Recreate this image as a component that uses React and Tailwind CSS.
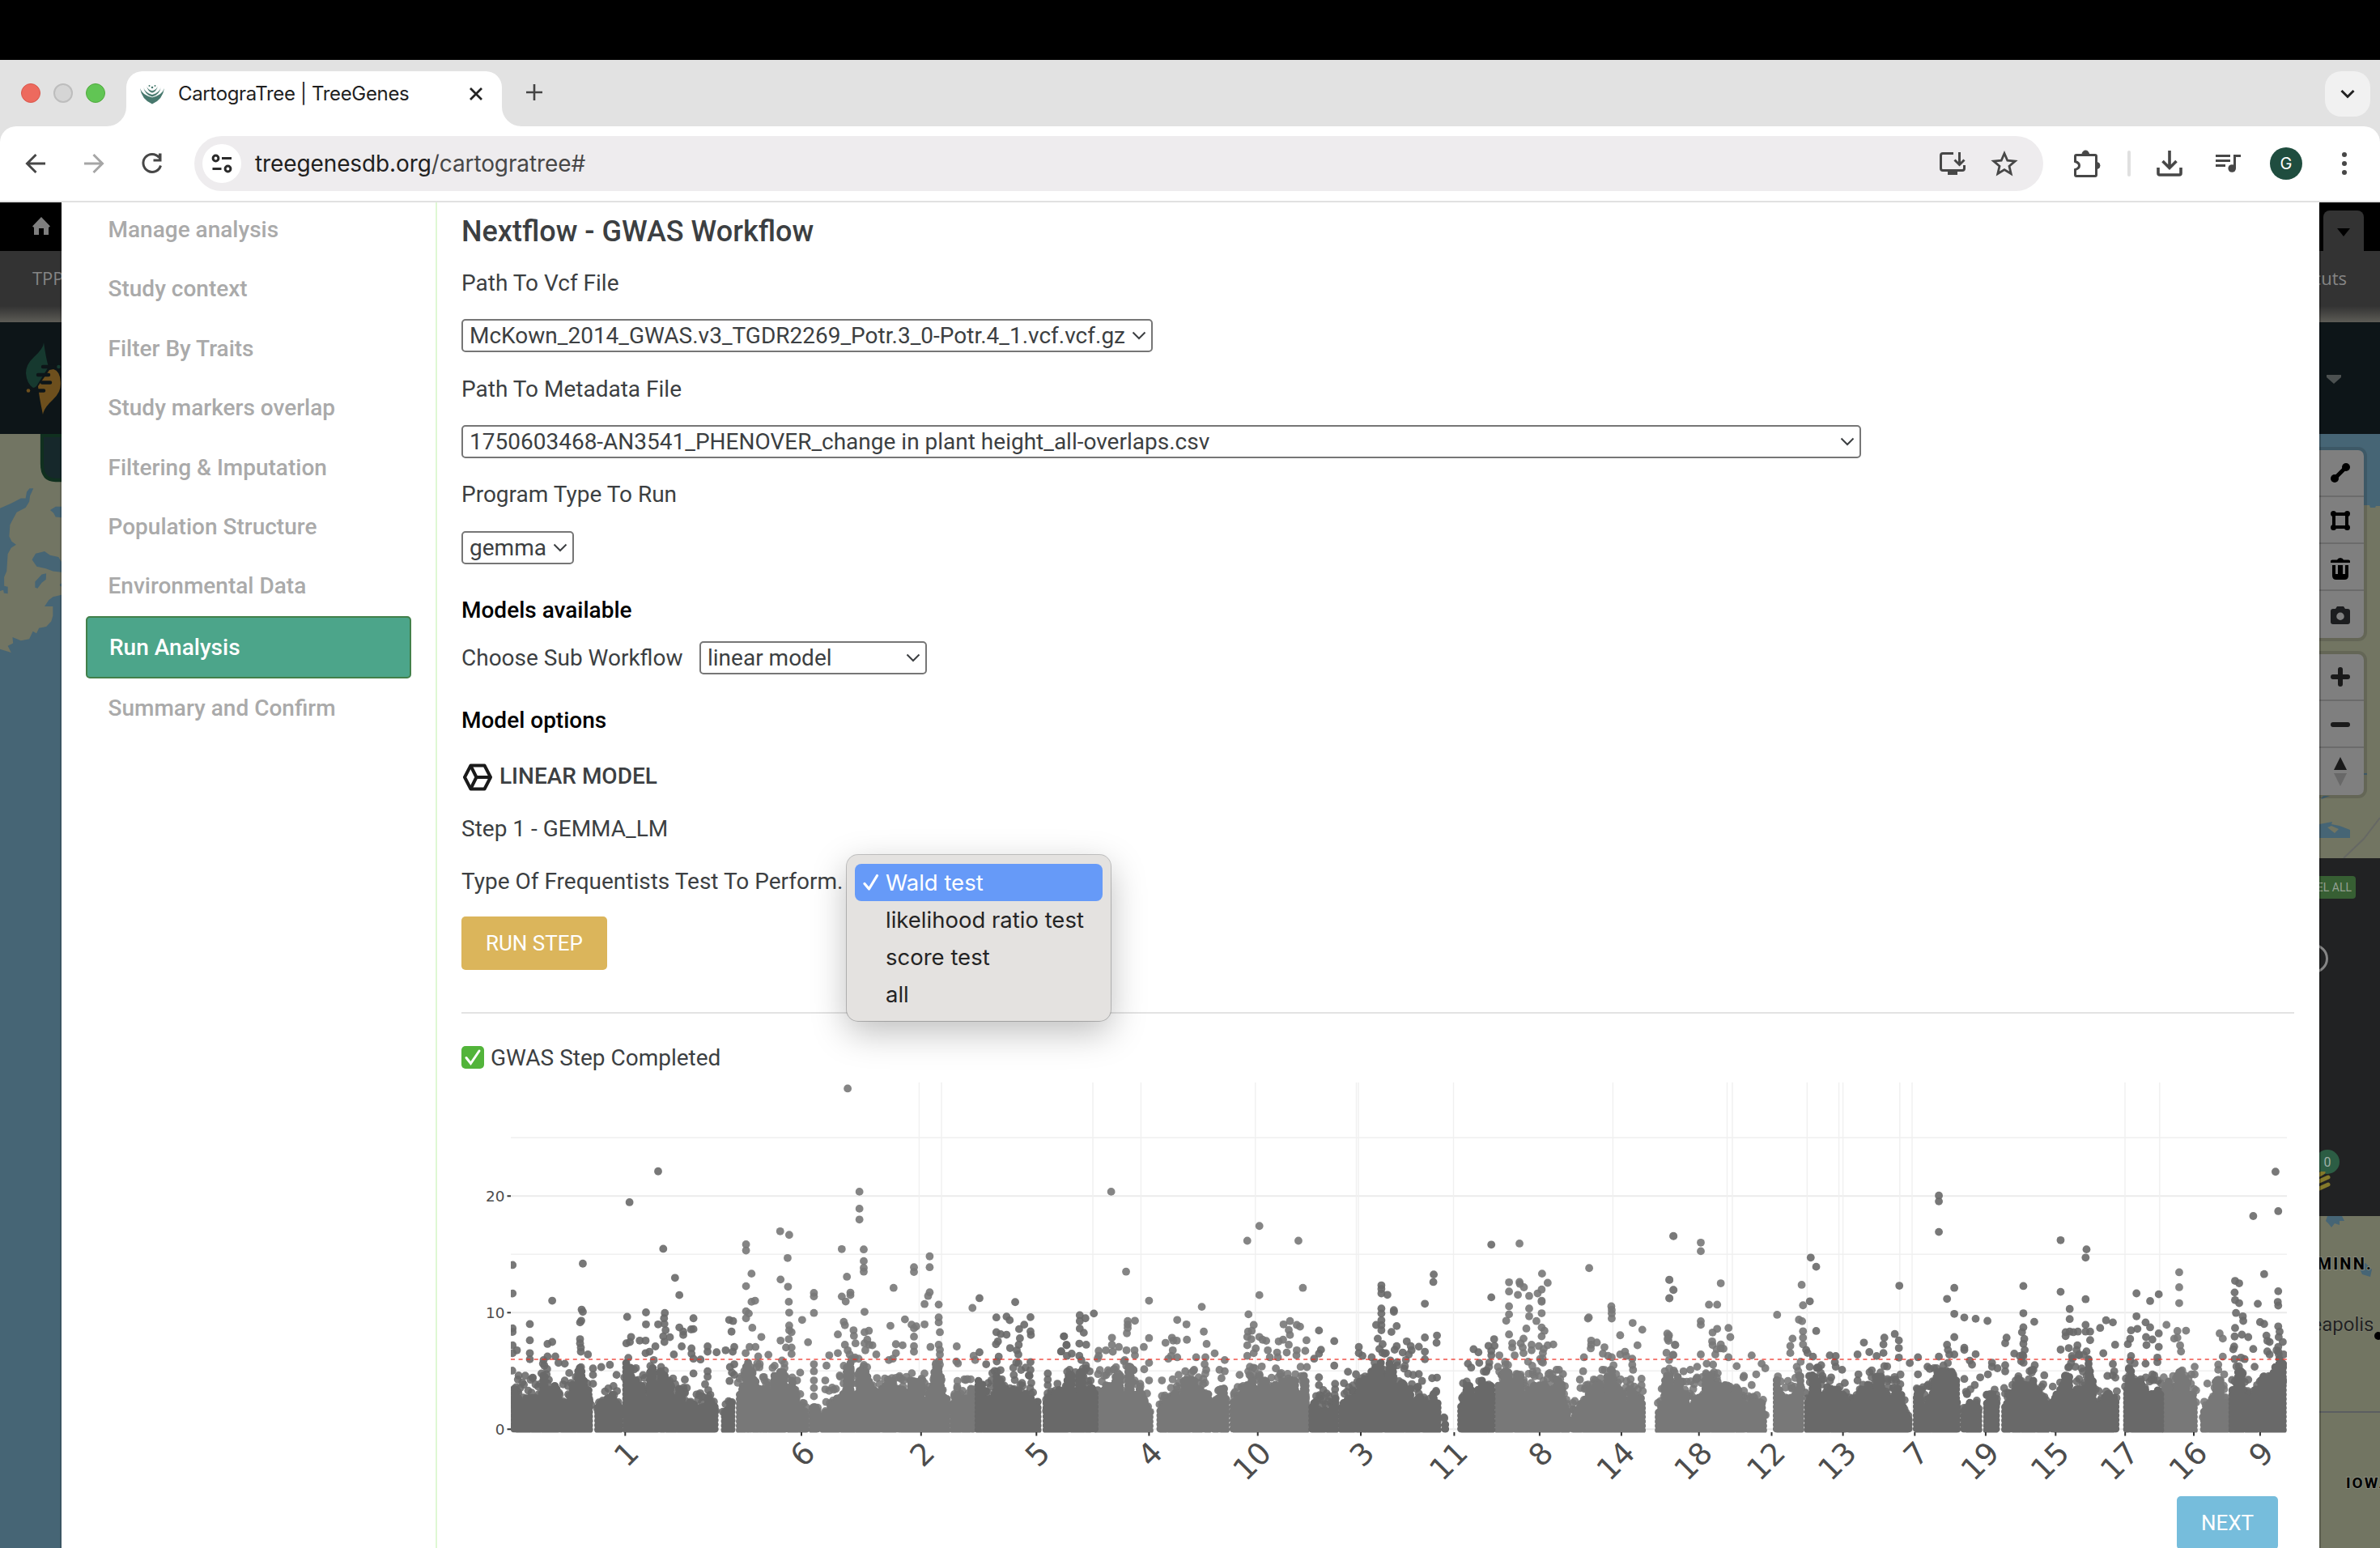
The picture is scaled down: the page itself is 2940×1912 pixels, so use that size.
import React from "react";

const DARK = "#696969";
const LIGHT = "#787878";

/* ---------- Manhattan plot data ---------- */

// Each panel keeps its own origin and resolution; points are x,y pairs in panel units.
const PANELS = [
  {
    x0: 560, sx: 2.0632, sy: 2.9037,
    points: [
      1005,71,522,368,449,479,1035,441,1035,502,1035,541,833,583,856,596,535,646,990,647,1046,648,746,630,746,652,151,704,330,699,852,679,1046,690,1046,714,1046,728,1214,673,1214,712,1174,712,1174,729,760,735,565,750,834,756,1003,746,746,780,853,782,1122,786,151,806,576,812,252,832,919,804,919,817,990,817,1012,803,1012,812,1000,835,1214,802,1210,815,1201,844,1237,846,769,832,760,836,855,836,1341,823,1323,858,1432,837,327,864,330,872,491,874,539,876,443,890,746,870,753,878,746,895,856,875,919,876,1048,872,195,916,326,904,323,910,491,917,522,917,612,895,612,934,606,935,703,901,713,905,709,943,537,895,538,915,541,938,535,960,538,980,576,928,586,943,586,955,552,963,889,901,856,921,856,938,862,945,855,970,762,929,785,962,834,975,904,981,995,908,998,920,980,953,1020,938,1021,958,1059,940,1048,945,1114,922,1151,899,1168,918,1180,924,1201,917,1174,931,1237,892,1237,910,1240,945,1174,961,151,931,151,944,195,974,323,970,323,985,325,1000,325,1015,252,980,240,987,151,992,162,1010,151,1020,195,1020,195,1042,240,1032,260,1032,343,1025,441,985,453,962,450,980,475,975,490,975,515,996,500,1015,490,1020,562,1025,582,996,607,1003,607,1022,612,1040,648,996,648,1015,671,1017,694,1010,716,998,712,1015,755,998,770,998,745,1020,803,1026,777,1032,848,1000,862,1000,862,1023,958,1028,980,1020,998,990,1005,1010,1010,1025,1025,985,1068,992,1055,972,1060,990,1050,1010,1048,985,1078,1025,1128,988,1145,992,1128,1020,1174,995,1174,1015,1216,998,1237,990,1240,1008,1240,1025,1283,996,1286,1057,1326,1030,1341,1017,1330,1045,1384,892,1410,889,1418,902,1471,891,1455,918,1442,934,1472,955,1471,942,1384,945,1395,952,1410,954,1388,978,1383,988,1444,967,1441,990,1419,1002,1436,1010,1440,1025,1390,1033,1385,1050,1556,960,1563,992,1549,1014,1358,1060,356,1075,356,1098,377,1070,399,1062,416,1098,356,1130,648,1085,648,1105,612,1093,590,1115,630,1043,884,1090,876,1118,919,1060,919,1085,919,1118,919,1145,919,1175,951,1065,948,1118,948,1150,1515,1093,1515,1115,1515,1135,1471,1052,1471,1080,705,1070,710,1090,716,1060,704,1120,230,1045,232,1065,268,1055,284,1058,1282,1050,1110,1045,1120,1040,585,1150,590,1160,716,1098,
    ],
    clusters: [
      [DARK, 147,5.5, 155,5.5, 160,4.7, 210,4.5, 222,4.4, 230,5.8, 240,4.6, 260,4.5, 280,3.6, 293,5, 310,5, 325,6, 338,4, 360,3],
      [DARK, 361,2.5, 380,3, 395,4.3, 415,3.5, 434,2],
      [DARK, 432,5, 440,6.5, 455,6.2, 480,5.2, 490,3.4, 505,6, 540,5.6, 560,5, 575,3.6, 612,3.8, 640,4, 680,3],
      [DARK, 683,2, 700,2.5, 722,3.2],
      [LIGHT, 722,3.5, 735,5.4, 750,6.2, 770,6, 800,5.4, 820,6, 850,6, 862,5, 872,3.6, 885,3.2, 908,1.3],
      [LIGHT, 910,1.6, 918,2.8, 940,1.4],
      [LIGHT, 937,1.6, 960,3.4, 980,4.2, 995,6.2, 1040,6.3, 1060,5, 1085,4.4, 1110,4.8, 1150,4.8, 1185,5, 1215,4.6, 1237,7, 1248,4.2, 1268,1.5],
      [LIGHT, 1266,2, 1280,4, 1300,4.6, 1333,5],
      [DARK, 1332,4.6, 1343,4.8, 1360,3.6, 1380,5.7, 1395,5.2, 1420,4.6, 1440,6.5, 1470,5, 1485,3, 1500,1.6],
      [DARK, 1503,2.4, 1515,3.4, 1540,2.8, 1568,4.6],
    ],
  },
  {
    x0: 1300, sx: 2.0103, sy: 2.9037,
    points: [
      146,441,514,564,484,617,611,617,183,728,240,832,371,854,514,812,622,786,1090,631,1160,627,1333,715,1542,600,1532,757,1542,793,1532,823,947,738,946,765,925,843,817,777,817,790,817,806,832,811,817,860,817,878,848,866,848,872,855,923,842,944,804,919,817,902,817,920,817,938,1090,820,1134,766,1134,799,1134,852,1134,881,1160,765,1161,772,1171,784,1156,811,1184,815,1184,860,1184,888,1205,806,1215,792,1216,735,1230,768,1215,832,1215,836,1215,877,1202,905,1177,932,1127,904,1134,953,1215,928,1222,940,1215,960,1388,852,1389,865,1389,878,1389,896,1332,892,1330,896,1441,912,1465,936,1410,956,1453,992,1371,999,1352,982,1338,975,1338,990,1337,1003,103,878,68,884,68,905,68,932,82,895,78,947,29,960,35,990,67,986,84,990,22,1014,48,1022,36,1030,67,1030,72,1045,187,905,187,918,187,930,205,904,185,949,240,966,148,965,148,990,165,998,184,1010,204,1010,227,998,205,1028,133,1010,115,1012,150,1015,115,1030,310,901,333,917,376,943,297,965,300,975,309,975,334,972,281,983,383,987,403,1021,428,1045,299,1010,295,1030,310,1035,357,1035,380,1035,288,1040,487,881,500,919,495,940,486,943,484,962,494,970,514,962,522,972,531,976,484,992,505,1003,562,978,573,972,574,917,590,905,607,919,615,925,587,937,590,955,631,974,662,939,535,1010,558,1018,582,1018,587,990,607,1010,628,1012,606,1028,500,1020,484,1030,540,1035,560,1035,700,977,667,1008,662,1022,650,1040,700,1065,761,998,761,1020,770,1030,808,968,820,988,812,1005,855,995,850,1008,880,978,890,995,910,997,925,964,925,1015,955,957,954,983,892,1010,870,1018,885,1025,793,1035,828,1020,925,1042,1097,970,1083,994,1098,994,1046,1006,1058,1017,1090,1012,1090,1028,1110,1028,1142,1000,1142,985,1170,968,1163,985,1168,1000,1190,990,1208,995,1220,1005,1218,1020,1244,989,1230,992,1190,1010,1170,1020,1148,1028,1320,1035,1367,1022,1380,1030,1389,1035,1410,1025,1422,1015,1425,1030,1440,1040,1527,950,1530,962,1530,976,1547,991,1525,1019,1542,1027,240,1055,228,1078,240,1118,218,1130,235,1165,272,1118,465,1098,662,1107,662,1135,734,1087,754,1096,724,1128,702,1130,702,1150,910,1095,918,1120,910,1165,955,1108,943,1110,1032,1058,1040,1072,1060,1055,1318,1085,1310,1115,1463,1112,1463,1135,1445,1140,1268,1095,1252,1080,1258,1080,1442,1080,1440,1062,1366,1080,520,1068,555,1075,632,1070,330,1085,352,1080,378,1060,382,1080,415,1080,428,1085,420,1110,
    ],
    clusters: [
      [DARK, 0,3.4, 20,4, 40,5.4, 55,4.8, 70,6.4, 90,5.4, 112,4.2],
      [LIGHT, 107,5.6, 114,6.5, 130,5.4, 150,6, 180,6, 200,5.6, 215,3.8, 230,3, 248,1],
      [LIGHT, 262,2.6, 280,3.8, 300,5, 315,5.2, 335,4.8, 350,5, 375,5.2, 394,3.4],
      [LIGHT, 396,2.8, 415,4.2, 428,4.2, 441,3],
      [LIGHT, 442,2.8, 465,4, 485,6.5, 500,5.6, 520,4.8, 550,5, 590,5.4, 620,5.4, 638,4.8],
      [DARK, 636,2, 645,2.8, 660,3.6, 680,3.2, 690,2.4, 702,4, 711,2],
      [DARK, 712,2.2, 724,3, 740,3.7, 770,4.6, 795,5.4, 820,7, 850,5.6, 882,6.4, 895,4.6, 920,3, 938,2.2, 953,4, 968,1.6],
      [DARK, 969,1, 978,1.2, 988,1],
      [DARK, 1007,2, 1030,5, 1045,3.4, 1062,4.6, 1088,6.5, 1103,5.4],
      [LIGHT, 1101,5.6, 1112,6.3, 1140,5.4, 1180,6, 1220,6.4, 1240,4.8, 1262,4.7, 1275,3, 1287,1.5],
      [LIGHT, 1284,1.2, 1294,2.2, 1310,3.5, 1330,4.4, 1360,4.7, 1390,6, 1410,4.7, 1428,4.5, 1445,3.5, 1465,3.6, 1476,2],
      [LIGHT, 1500,2, 1510,3.4, 1527,6, 1545,5, 1568,4.6],
    ],
  },
  {
    x0: 2060, sx: 1.7818, sy: 2.6486,
    points: [
      13,548,73,569,73,597,4,691,13,724,4,751,117,702,91,772,109,772,73,826,73,838,134,848,109,851,99,863,138,878,117,902,123,916,98,892,99,904,108,918,117,915,105,935,73,935,185,938,16,903,3,872,0,884,12,936,134,944,241,805,315,618,327,648,295,707,298,774,313,761,289,821,296,826,327,858,298,859,298,880,275,883,298,902,270,907,305,920,308,930,270,930,597,415,597,434,597,534,510,710,1338,337,1344,466,1289,482,865,561,922,591,920,618,783,711,865,730,920,754,631,717,615,753,631,802,653,814,678,818,704,825,783,800,807,828,885,786,885,819,1126,666,1126,715,1126,767,1032,735,1081,738,1062,760,1032,810,1098,838,1313,672,1249,694,1258,702,1248,732,1249,757,1258,767,1299,769,1344,728,1343,763,1344,775,1251,799,1266,810,1267,825,1304,829,1313,835,1249,848,1344,843,1347,860,965,823,980,830,952,848,985,903,959,931,1020,856,1034,851,1018,884,1013,901,1052,830,1062,846,1053,878,1067,886,1081,866,1081,910,1054,904,1141,857,1122,858,1122,880,1115,883,1128,905,1130,925,1215,866,1222,883,1222,942,1248,876,1264,870,1278,878,1247,909,1245,918,1289,917,1318,873,1320,890,1325,894,1345,878,1354,894,1344,910,1344,925,1320,925,1325,935,1356,935,920,838,930,860,920,860,903,860,885,860,876,862,876,875,893,862,930,888,865,919,883,914,902,905,900,920,922,925,905,935,890,940,783,846,780,862,785,884,783,900,786,920,783,940,763,932,775,940,746,880,743,898,678,934,653,913,653,920,631,878,615,903,617,920,631,935,620,935,597,942,551,944,500,868,477,880,509,889,509,914,475,902,432,896,444,927,418,935,475,930,460,940,357,938,370,940,509,945,320,942,152,973,207,965,215,980,168,1005,185,1035,167,1010,195,1000,533,963,551,1000,572,975,577,982,670,968,665,955,653,1015,676,1035,688,1010,714,962,714,975,726,980,705,1000,743,970,743,990,829,1003,980,966,968,1005,983,990,1160,975,1160,1000,1153,1000,1188,1030,1212,968,1212,985,1225,1000,1052,965,1078,945,1078,960,420,1000,418,1020,390,1028,384,985,368,960,370,975,338,970,360,1010,808,970,805,985,1270,950,1292,975,35,990,65,975,50,985,86,965,100,968,1020,940,1018,955,1248,950,1262,945,
    ],
    clusters: [
      [LIGHT, 0,5.6, 12,5, 20,4.2, 50,4.2, 68,4.6, 100,5.6, 120,4.4, 140,3.8, 165,3.8, 185,3, 205,3.2, 222,1.8],
      [LIGHT, 235,3, 241,6, 255,3.6, 270,4.6, 292,6, 303,4.6],
      [DARK, 301,5, 320,6, 335,5, 350,4.2, 370,4.4, 385,4, 400,2.6, 420,3.2, 440,5, 465,5.2, 480,5.6, 495,4.6, 514,5, 520,1.8, 540,1],
      [DARK, 541,2.4, 552,3.8, 575,4, 597,6.4, 620,6.2, 632,5, 645,2],
      [DARK, 647,2.4, 660,3.8, 676,3, 694,2.4],
      [DARK, 696,3, 714,4, 733,2],
      [DARK, 735,3, 745,4, 765,5, 785,6.5, 800,5, 815,4, 829,4.4, 840,2],
      [DARK, 842,3.4, 865,4.6, 885,6, 905,6.5, 925,6.6, 938,4, 960,3, 975,4, 984,5, 996,2],
      [DARK, 1003,3, 1018,6.4, 1040,4.8, 1060,4.8, 1078,6, 1091,4.8],
      [LIGHT, 1088,4.4, 1115,5.6, 1130,6, 1145,4.4, 1160,4, 1169,2],
      [LIGHT, 1174,1.8, 1190,3.2, 1210,5, 1225,4.4, 1238,2.4],
      [DARK, 1236,4, 1248,6.2, 1270,5.6, 1290,4.6, 1306,4.6, 1322,6, 1345,7, 1364,4.6],
    ],
  },
];

// Chromosome spans used to pick the colour of a point.
const BANDS = [
  [631, 910, DARK], [910, 1205, LIGHT], [1205, 1354, DARK], [1354, 1616, LIGHT],
  [1616, 1848, DARK], [1848, 2229, LIGHT], [2229, 2672, DARK], [2672, 2754, LIGHT], [2754, 2830, DARK],
];
const bandColor = (x) => (BANDS.find(([a, b]) => x >= a && x < b) || BANDS[0])[2];

const V_LINES = [1135.4, 1163, 1350, 1409.4, 1550.7, 1675.5, 1678, 1795.5, 1992.4, 2133.5, 2140, 2232.3, 2271.6, 2276.6, 2346.8, 2362, 2625, 2667.8];
const X_TICKS = [
  [772.3, "1"], [990, "6"], [1137.8, "2"], [1280.3, "5"], [1419.4, "4"], [1553.7, "10"], [1681, "3"],
  [1796.4, "11"], [1901.9, "8"], [2002.9, "14"], [2098.7, "18"], [2188.5, "12"], [2276.6, "13"],
  [2365.3, "7"], [2452.9, "19"], [2539.3, "15"], [2625.2, "17"], [2710, "16"], [2791.9, "9"],
];
const yOf = (v) => 1765.3 - 14.4 * v;

function seeded(seed) {
  let s = seed;
  return () => {
    s = (s * 1664525 + 1013904223) % 4294967296;
    return s / 4294967296;
  };
}

function buildPlot() {
  const rnd = seeded(7);
  const solid = { [DARK]: [], [LIGHT]: [] };
  const loose = [];
  const peaks = [];
  for (const p of PANELS) {
    for (const [color, ...prof] of p.clusters) {
      const xs = [];
      for (let i = 0; i < prof.length; i += 2) xs.push([p.x0 + prof[i] / p.sx, prof[i + 1]]);
      const start = xs[0][0] + 3.8;
      const end = xs[xs.length - 1][0] - 3.8;
      let k = 0;
      let level = 0.6;
      let step = 0;
      for (let x = start; x <= end + 0.1; x += 2.4) {
        while (k < xs.length - 2 && x > xs[k + 1][0]) k++;
        const t = (x - xs[k][0]) / (xs[k + 1][0] - xs[k][0]);
        const h = xs[k][1] + t * (xs[k + 1][1] - xs[k][1]);
        if (step++ % 3 === 0) level = 0.45 + 0.45 * rnd();
        const top = h * (level + 0.08 * rnd());
        const xj = x + (rnd() - 0.5) * 2;
        for (let v = -0.1 + rnd() * 0.15; v < top; v += 0.38) solid[color].push(`M${xj.toFixed(1)} ${yOf(v).toFixed(1)}h.01`);
        for (let n = 0; n < 2; n++) {
          loose.push([x + (rnd() - 0.5) * 5, yOf(h * (0.4 + 0.6 * rnd())), color]);
        }
      }
    }
    for (let i = 0; i < p.points.length; i += 2) {
      const x = p.x0 + p.points[i] / p.sx;
      peaks.push([x, 1320 + p.points[i + 1] / p.sy, bandColor(x)]);
    }
  }
  return { solid, loose, peaks };
}
const PLOT = buildPlot();

function ManhattanPlot() {
  return (
    <svg className="block h-[520px] w-[2264px] shrink-0" viewBox="570 1326 2264 520">
      <defs>
        <clipPath id="plot-area"><rect x="631" y="1337" width="2194" height="432.5" /></clipPath>
      </defs>
      {[5, 15, 25].map((v) => <line key={v} x1="631" x2="2825" y1={yOf(v)} y2={yOf(v)} stroke="#f0f0f0" strokeWidth="1.4" />)}
      {[0, 10, 20].map((v) => <line key={v} x1="631" x2="2825" y1={yOf(v)} y2={yOf(v)} stroke="#ebebeb" strokeWidth="2" />)}
      {V_LINES.map((x) => <line key={x} x1={x} x2={x} y1="1337" y2="1769" stroke="#f0f0f0" strokeWidth="1.4" />)}
      <g clipPath="url(#plot-area)">
        {PLOT.loose.map(([x, y, c], i) => <circle key={i} cx={x} cy={y} r="4.9" fill={c} fillOpacity="0.88" />)}
        {PLOT.peaks.map(([x, y, c], i) => <circle key={i} cx={x} cy={y} r="4.9" fill={c} fillOpacity="0.9" />)}
        <path d={PLOT.solid[LIGHT].join("")} stroke={LIGHT} strokeWidth="9.8" strokeLinecap="round" />
        <path d={PLOT.solid[DARK].join("")} stroke={DARK} strokeWidth="9.8" strokeLinecap="round" />
      </g>
      <line x1="631" x2="2825" y1="1679" y2="1679" stroke="#ee2c20" strokeOpacity="0.62" strokeWidth="2" strokeDasharray="5 4.6" />
      {[0, 10, 20].map((v) => (
        <g key={v}>
          <line x1="626.5" x2="631" y1={yOf(v)} y2={yOf(v)} stroke="#333" strokeWidth="2" />
          <text x="623.5" y={yOf(v) + 6.6} textAnchor="end" fontFamily="DejaVu Sans" fontSize="18.5" fill="#4d4d4d">{v}</text>
        </g>
      ))}
      {X_TICKS.map(([x, label]) => (
        <g key={x}>
          <line x1={x} x2={x} y1="1769" y2="1773.5" stroke="#333" strokeWidth="2" />
          <text transform={`translate(${x + 19} 1797) rotate(-45)`} textAnchor="end" fontFamily="DejaVu Sans" fontSize="37.5" fill="#4d4d4d">{label}</text>
        </g>
      ))}
    </svg>
  );
}

/* ---------- Browser chrome ---------- */

function TabStrip() {
  return (
    <div className="flex h-[82px] shrink-0 items-end bg-[#e2e2e2]">
      <div className="ml-[26px] mb-[29px] flex gap-4">
        <span className="size-6 rounded-full border border-[#d9564b] bg-[#ed6a5e]" />
        <span className="size-6 rounded-full border-2 border-[#bdbdbd] bg-[#d5d5d5]" />
        <span className="size-6 rounded-full border border-[#4faa3c] bg-[#61c554]" />
      </div>
      <svg className="ml-[2px] h-[68px] w-6" viewBox="0 0 24 68"><path d="M24 44A24 24 0 0 1 0 68H24Z" fill="#fff" /></svg>
      <div className="flex h-[68px] w-[464px] items-center rounded-t-[20px] bg-white pl-[16px] pr-[23px] pb-[13px]">
        <svg className="h-[26px] w-[32px]" viewBox="0 0 32 26" fill="#47786d">
          <path d="M1 6Q4 15 16 17Q28 15 31 6Q29 20 16 25.500Q3 20 1 6Z" />
          <path d="M5 4Q8 12 16 13.500Q24 12 27 4Q26 14 16 17Q6 14 5 4Z" stroke="#fff" strokeWidth=".8" />
          <path d="M9 3Q11 8 16 9Q21 8 23 3Q22 10 16 12Q10 10 9 3Z" stroke="#fff" strokeWidth=".6" />
          <circle cx="16" cy="5" r="1.300" /><circle cx="12.500" cy="3" r="1" /><circle cx="19.500" cy="3" r="1" />
        </svg>
        <span className="ml-[16px] whitespace-nowrap font-[Inter] text-[24px] leading-8 tracking-[-0.350px] text-[#1f1f1f]">CartograTree | TreeGenes</span>
        <svg className="ml-auto size-[18px]" viewBox="0 0 18 18"><path d="M2 2L16 16M16 2L2 16" stroke="#222" strokeWidth="2.800" /></svg>
      </div>
      <svg className="h-[68px] w-6" viewBox="0 0 24 68"><path d="M0 44A24 24 0 0 0 24 68H0Z" fill="#fff" /></svg>
      <svg className="ml-[5px] mb-[31px] size-[22px]" viewBox="0 0 22 22"><path d="M11 1V21M1 11H21" stroke="#444" strokeWidth="2.600" /></svg>
      <div className="ml-auto mr-3 mb-3 flex size-14 items-center justify-center rounded-[20px] bg-[#f1f1f1]">
        <svg className="h-3 w-5" viewBox="0 0 20 12"><path d="M2.500 2L10 9.500L17.500 2" fill="none" stroke="#222" strokeWidth="3" /></svg>
      </div>
    </div>
  );
}

function Toolbar() {
  return (
    <div className="shrink-0 bg-[#e2e2e2]">
      <div className="flex h-[94px] items-center rounded-t-[20px] border-b-2 border-[#e1e1e1] bg-white text-[#474747]">
        <svg className="ml-[31px] h-[26px] w-[26px]" viewBox="0 0 26 26"><path d="M25 13H3M13.500 2L2.500 13L13.500 24" fill="none" stroke="#474747" strokeWidth="3" /></svg>
        <svg className="ml-[46px] h-[26px] w-[26px]" viewBox="0 0 26 26"><path d="M1 13H23M12.500 2L23.500 13L12.500 24" fill="none" stroke="#a6a6a6" strokeWidth="3" /></svg>
        <svg className="ml-[45px] size-[28px]" viewBox="0 0 28 28"><path d="M22.500 6.500A11 11 0 1 0 24.500 16.500" fill="none" stroke="#474747" strokeWidth="3" /><path d="M25.500 1.500V11.500H15.500V8.500H22V1.500Z" fill="#474747" /></svg>
        <div className="ml-[38px] flex h-[68px] w-[2284px] items-center rounded-full bg-[#eeecee] pl-[10px] pr-[31px]">
          <span className="flex size-12 items-center justify-center rounded-full bg-white">
            <svg className="size-[26px]" viewBox="0 0 26 26" fill="none" stroke="#2b2b2b" strokeWidth="3"><circle cx="5.500" cy="6.500" r="3.400" /><path d="M13 6.500H25M1.500 19.500H12.500" /><circle cx="20.500" cy="19.500" r="3.400" /></svg>
          </span>
          <span className="ml-[17px] whitespace-nowrap font-[Inter] text-[28px] leading-9 tracking-[-0.110px] text-[#1f1f1f]">treegenesdb.org<span className="text-[#474747]">/cartogratree#</span></span>
          <svg className="ml-auto h-[32px] w-[34px]" viewBox="0 0 34 32" fill="none" stroke="#474747" strokeWidth="3"><path d="M18 3.500H5Q2.500 3.500 2.500 6V22Q2.500 24.500 5 24.500H29Q31.500 24.500 31.500 22V18" /><path d="M25.500 2V17M19.500 11.500L25.500 17.500L31.500 11.500" /><path d="M11 28H23" strokeWidth="4" /></svg>
          <svg className="ml-[30px] size-[34px]" viewBox="0 0 34 34"><path d="M17 4.500L20.800 13.200L30.200 14L23 20.200L25.200 29.500L17 24.600L8.800 29.500L11 20.200L3.800 14L13.200 13.200Z" fill="none" stroke="#474747" strokeWidth="2.800" /></svg>
        </div>
        <svg className="ml-[36px] size-[36px]" viewBox="0 0 36 36" fill="none" stroke="#474747" strokeWidth="3"><path d="M6 7.500H28Q29.500 7.500 29.500 9V32Q29.500 33.500 28 33.500H5Q3.500 33.500 3.500 32V25.500Q8.500 24 8.500 20.500Q8.500 17 3.500 15.500V9Q3.500 7.500 5 7.500Z" /><path d="M12 6.500A4.200 4.500 0 0 1 20.500 6.500Z" fill="#474747" strokeWidth="1" /><path d="M30 16.500A4 4 0 0 1 30 24.500Z" fill="#474747" strokeWidth="1" /></svg>
        <span className="ml-[32px] h-8 w-1 rounded-full bg-[#e0e0e0]" />
        <svg className="ml-[31px] size-[34px]" viewBox="0 0 34 34" fill="none" stroke="#474747" strokeWidth="3.600"><path d="M17 1V22M8.500 14L17 22.500L25.500 14" /><path d="M3 22V29Q3 31 5 31H29Q31 31 31 29V22" /></svg>
        <svg className="ml-[40px] h-[26px] w-[32px]" viewBox="0 0 32 26"><path d="M0 3.500H18M0 9.500H18M0 15.500H12" stroke="#474747" strokeWidth="3" /><path d="M23.500 19V3.500H31" fill="none" stroke="#474747" strokeWidth="3" /><circle cx="20.200" cy="19" r="4.800" fill="#474747" /></svg>
        <span className="ml-[35px] flex size-10 items-center justify-center rounded-full bg-[#1f4d3f] font-[Inter] text-[20px] text-white">G</span>
        <svg className="ml-[48px] h-[32px] w-2" viewBox="0 0 8 32" fill="#474747"><circle cx="4" cy="5" r="3" /><circle cx="4" cy="16" r="3" /><circle cx="4" cy="27" r="3" /></svg>
      </div>
    </div>
  );
}

/* ---------- Dimmed page on both sides of the dialog ---------- */

function LeftPage() {
  return (
    <div className="relative flex w-[76px] shrink-0 flex-col overflow-hidden bg-[#466575]">
      <div className="h-[60px] shrink-0 bg-black pl-[40px] pt-[18px]">
        <svg className="h-[23px] w-[22px]" viewBox="0 0 22 23" fill="#7f7f7f"><path d="M11 0L22 11.500L20 13V22H14V14H8V22H2V13L0 11.500Z" /></svg>
      </div>
      <div className="h-[68px] shrink-0 whitespace-nowrap bg-[#333] pl-[40px] pt-[17px] font-['Open_Sans'] text-[22px] leading-8 text-[#858585]">TPPS</div>
      <div className="h-[20px] shrink-0 bg-linear-to-b from-[#333] to-[#5d5c56]" />
      <div className="h-[138px] shrink-0 bg-[#0d1518] pl-[30px] pt-[24px]">
        <svg className="h-[92px] w-[52px]" viewBox="0 0 52 92">
          <path d="M24 1Q24 8 12 19Q2 28 2 39Q3 52 11 57Q13 57 15 55L30 31Q27 22 24 1Z" fill="#16392f" />
          <path d="M23 90Q24 82 35 72Q46 62 45 50Q44 36 36 34L31 35L17 55Q18 66 23 90Z" fill="#6d4f1d" />
          <path d="M23 31H38M17 41H30M22 50.500H32M14 60.500H24" stroke="#0d1518" strokeWidth="4.500" strokeLinecap="round" />
          <circle cx="5" cy="60.500" r="2.300" fill="#6d4f1d" /><circle cx="42.500" cy="31" r="2.300" fill="#16392f" />
        </svg>
      </div>
      <svg className="h-[345px] w-[76px] shrink-0" viewBox="0 725 221 845" preserveAspectRatio="none">
        <rect x="0" y="725" width="221" height="845" fill="#727563" />
        <g fill="#466575">
          <path d="M0 950L40 935L75 920L92 920L96 900L106 890L120 890L108 912L105 930L92 948L60 962L45 985L36 1000L33 1035L42 1050L58 1060L40 1070L28 1088L24 1140L15 1158L15 1185L28 1187L28 1208L14 1206L12 1197L0 1200Z" />
          <path d="M180 955L200 945L221 945V978L200 976L192 964Z" />
          <path d="M115 1105L128 1087L160 1080L180 1092L210 1097L221 1112V1143L190 1140L165 1132L132 1126Z" />
          <path d="M126 1172L150 1150L166 1147L165 1165L150 1175L135 1192L126 1190Z" />
          <path d="M221 1212L190 1218L175 1228L160 1247L190 1247V1275L184 1292L166 1308L140 1312L131 1328L118 1322L105 1345L75 1350L45 1340L47 1358L28 1366L40 1386L0 1376V1570H221Z" />
          <path d="M214 1182L221 1176V1187Z" />
        </g>
        <path d="M145 725H221V870H200Q145 870 145 815Z" fill="#10301f" />
        <path d="M157 735H221V859H200Q157 859 157 815Z" fill="#16282b" />
      </svg>
      <div className="absolute inset-y-0 right-0 w-0.5 bg-black/15" />
    </div>
  );
}

function MapButton({ children, last }) {
  return (
    <div className={last ? "flex h-[58px] items-center justify-center" : "flex h-[58px] items-center justify-center border-b-2 border-[#6b6b6b]"}>
      {children}
    </div>
  );
}

function RightPage() {
  return (
    <div className="relative flex w-[75px] shrink-0 flex-col overflow-hidden bg-[#727563]">
      <div className="flex h-[60px] shrink-0 items-end bg-black pl-[5px]">
        <div className="flex h-[50px] w-[50px] items-center justify-center rounded-t-lg bg-[#333] pt-1">
          <svg className="h-2.5 w-4" viewBox="0 0 16 10"><path d="M0 0H16L8 10Z" fill="#000" /></svg>
        </div>
      </div>
      <div className="flex h-[68px] shrink-0 justify-end whitespace-nowrap bg-[#333] pr-[41px] pt-[17px] font-['Open_Sans'] text-[22px] leading-8 text-[#858585]">Shortcuts</div>
      <div className="h-[20px] shrink-0 bg-linear-to-b from-[#333] to-[#5d5c56]" />
      <div className="h-[138px] shrink-0 bg-[#0d1518] pl-[9px] pt-[65px]">
        <svg className="h-[11px] w-[18px]" viewBox="0 0 18 11"><path d="M0 0H18V3L9 11L0 3Z" fill="#4b5050" /></svg>
      </div>
      <div className="h-[88px] shrink-0 bg-[#466575]" />
      <svg className="h-[436px] w-[75px] shrink-0" viewBox="2865 624 75 436">
        <rect x="2865" y="624" width="75" height="436" fill="#727562" />
        <path d="M2927 624H2940V625H2935L2934 627H2928Z" fill="#466575" />
        <path d="M2918 955H2924V957H2918ZM2867 986L2870 983H2878L2868 987ZM2865 1018L2881 1015L2880 1018L2890 1020L2903 1025V1035H2865Z" fill="#466575" />
        <path d="M2875 1022L2884 1029L2889 1024L2880 1020Z" fill="#727562" />
        <path d="M2895 1060L2920 1036L2940 1010" fill="none" stroke="#666864" strokeWidth="2" />
      </svg>
      <div className="h-[442px] shrink-0 overflow-hidden bg-[#212223]">
        <div className="mt-[22px] flex h-7 w-[45px] items-center justify-end rounded-r-[4px] bg-[#375f33] pr-[5px] font-[Roboto] text-[14px] whitespace-nowrap text-[#94a092]">CANCEL ALL</div>
        <div className="mt-[56px] -ml-[25px] size-[36px] rounded-full border-3 border-[#858585]" />
        <div className="mt-[218px] -ml-[5px] flex size-[30px] items-center justify-center rounded-full bg-[#2c5d44] pt-0.5 font-[Roboto] text-[16px] text-[#9fb0a7]">0</div>
        <svg className="-mt-[3px] h-[26px] w-[16px]" viewBox="0 0 16 26"><path d="M0 4L5 1M0 12L11 7M0 21L11 16" stroke="#84792a" strokeWidth="5" strokeLinecap="round" /></svg>
      </div>
      <svg className="h-[410px] w-[75px] shrink-0" viewBox="2865 1502 75 410">
        <rect x="2865" y="1502" width="75" height="410" fill="#727562" />
        <path d="M2875 1502H2893L2896 1508L2890 1508L2890 1513L2884 1511L2880 1516L2877 1512L2873 1508ZM2914 1565L2922 1560L2930 1568L2928 1577L2918 1574Z" fill="#466575" />
        <path d="M2865 1744H2940" stroke="#5b5e61" strokeWidth="2" />
        <circle cx="2938" cy="1650" r="5" fill="#000" />
        <g stroke="#85877a" strokeWidth="2" paintOrder="stroke" fill="#000" fontFamily="Roboto">
          <text x="2931" y="1568" textAnchor="end" fontSize="20" fontWeight="700" letterSpacing="2.200">MINN.</text>
          <text x="2932.500" y="1643.500" textAnchor="end" fontSize="24" fill="#222" strokeWidth="1">Minneapolis</text>
          <text x="2898" y="1838" fontSize="19" fontWeight="700" letterSpacing="2">IOWA</text>
        </g>
      </svg>
      <div className="absolute top-[302px] -left-[7px] flex w-[66px] flex-col gap-3">
        <div className="rounded-r-[11px] border-4 border-black/12 bg-[#7f7f7f] bg-clip-padding">
          <MapButton><svg className="size-6" viewBox="0 0 24 24"><path d="M5 19L19 5" stroke="#000" strokeWidth="5" /><circle cx="5" cy="19" r="5" /><circle cx="19" cy="5" r="5" /></svg></MapButton>
          <MapButton><svg className="mt-0.5 size-6" viewBox="0 0 24 24"><rect x="4" y="4" width="16" height="16" rx="2" fill="none" stroke="#000" strokeWidth="4" /><circle cx="3.500" cy="3.500" r="3.500" /><circle cx="20.500" cy="3.500" r="3.500" /><circle cx="3.500" cy="20.500" r="3.500" /><circle cx="20.500" cy="20.500" r="3.500" /></svg></MapButton>
          <MapButton><svg className="mt-1 h-[27px] w-6" viewBox="0 0 24 27"><path d="M0 6V4Q0 2.500 2 2.500H8Q9 0 12 0Q15 0 16 2.500H22Q24 2.500 24 4V6ZM2 9H22V22Q22 27 17 27H7Q2 27 2 22ZM6 9V20H9V9ZM15 9V20H18V9Z" fillRule="evenodd" /></svg></MapButton>
          <MapButton last><svg className="mt-0.5 h-[22px] w-6" viewBox="0 0 24 22"><path d="M3 3H6L8 0H16L18 3H21Q24 3 24 6V19Q24 22 21 22H3Q0 22 0 19V6Q0 3 3 3ZM12 7.500A4.700 4.700 0 1 0 12 17A4.700 4.700 0 1 0 12 7.500Z" fill="#1c1d1f" fillRule="evenodd" /></svg></MapButton>
        </div>
        <div className="rounded-r-[11px] border-4 border-black/12 bg-[#7f7f7f] bg-clip-padding">
          <MapButton><svg className="size-6" viewBox="0 0 24 24"><path d="M3 12H21M12 3V21" stroke="#1a1a1a" strokeWidth="6" strokeLinecap="round" /></svg></MapButton>
          <MapButton><svg className="mt-0.5 size-6" viewBox="0 0 24 24"><path d="M3 12H21" stroke="#1a1a1a" strokeWidth="6" strokeLinecap="round" /></svg></MapButton>
          <MapButton last><svg className="h-[36px] w-4" viewBox="0 0 16 36"><path d="M8 0L16 16H0Z" fill="#1a1a1a" /><path d="M8 36L0 20H16Z" fill="#686868" /></svg></MapButton>
        </div>
      </div>
      <div className="absolute inset-y-0 left-0 w-0.5 bg-black/20" />
    </div>
  );
}

/* ---------- Dialog ---------- */

const STEPS = ["Manage analysis", "Study context", "Filter By Traits", "Study markers overlap", "Filtering & Imputation", "Population Structure", "Environmental Data"];

function Sidebar() {
  return (
    <div className="w-[464px] shrink-0 border-r-2 border-[#dff8d4] px-[30px] pt-[14px] font-[Roboto] text-[28px] font-medium leading-[40px] text-[#aaaaaa]">
      {STEPS.map((s) => (
        <div key={s} className="mb-[33.400px] h-[40px] whitespace-nowrap pl-[27.500px]">{s}</div>
      ))}
      <div className="-mt-[17px] flex h-[77px] items-center rounded-[5px] border-2 border-[#42804a] bg-[#4ca58a] pt-px pl-[27px] text-white">Run Analysis</div>
      <div className="mt-[17px] h-[40px] whitespace-nowrap pl-[27.500px]">Summary and Confirm</div>
    </div>
  );
}

function Select({ value, className }) {
  return (
    <div className={"flex h-[41px] shrink-0 items-center justify-between rounded-[5px] border-2 border-[#767676] bg-white pl-[8px] pr-[6px] whitespace-nowrap " + className}>
      <span>{value}</span>
      <svg className="h-[11px] w-[18px]" viewBox="0 0 18 11"><path d="M1.500 1.500L9 9L16.500 1.500" fill="none" stroke="#3c3f42" strokeWidth="2" /></svg>
    </div>
  );
}

function TestMenu() {
  const items = ["likelihood ratio test", "score test", "all"];
  return (
    <div className="absolute -top-[13px] left-[476px] z-10 h-[205px] w-[326px] rounded-[14px] bg-[#e4e2e0] p-[11px_10px] font-[Inter] text-[27.500px] text-[#242424] shadow-[0_0_0_1px_rgba(0,0,0,0.22),0_14px_44px_rgba(0,0,0,0.26)]">
      <div className="flex h-[46px] items-center rounded-[8px] bg-[#669af8] pl-[10px] text-white">
        <svg className="h-[22px] w-[20px]" viewBox="0 0 20 22"><path d="M2 12.500L7.500 19L17.500 2.500" fill="none" stroke="#fff" strokeWidth="3.200" strokeLinecap="round" strokeLinejoin="round" /></svg>
        <span className="ml-[8px]">Wald test</span>
      </div>
      {items.map((t) => <div key={t} className="flex h-[46px] items-center whitespace-nowrap pl-[38px]">{t}</div>)}
    </div>
  );
}

function Main() {
  return (
    <div className="flex grow flex-col items-start pl-[30px] pt-[12px] font-[Roboto] text-[28px] leading-[40px] text-[#3c3f42]">
      <h1 className="h-12 shrink-0 text-[36px] font-medium leading-[48px]">Nextflow - GWAS Workflow</h1>
      <div className="mt-[20px] h-10 shrink-0">Path To Vcf File</div>
      <Select className="mt-[24px] w-[854px]" value="McKown_2014_GWAS.v3_TGDR2269_Potr.3_0-Potr.4_1.vcf.vcf.gz" />
      <div className="mt-[26px] h-10 shrink-0">Path To Metadata File</div>
      <Select className="mt-[24px] w-[1729px]" value="1750603468-AN3541_PHENOVER_change in plant height_all-overlaps.csv" />
      <div className="mt-[25px] h-10 shrink-0">Program Type To Run</div>
      <Select className="mt-[25px] w-[139px]" value="gemma" />
      <div className="mt-[37px] h-10 shrink-0 font-medium text-black">Models available</div>
      <div className="mt-[18px] flex h-[41px] shrink-0 items-center">
        <span className="w-[294px] pt-px">Choose Sub Workflow</span>
        <Select className="w-[281px]" value="linear model" />
      </div>
      <div className="mt-[37px] h-10 shrink-0 font-medium text-black">Model options</div>
      <div className="mt-[29px] flex h-[40px] shrink-0 items-center font-medium">
        <svg className="mt-[2px] mr-[9px] ml-[2px] h-[34px] w-[36px]" viewBox="0 0 36 34" fill="none" stroke="#1a1a1a" strokeWidth="4" strokeLinejoin="round"><path d="M9.500 2.500H26.500L34 17L26.500 31.500H9.500L2 17Z" /><path d="M9.500 3L16.500 17L9.500 31M16.500 17H33" /></svg>
        LINEAR MODEL
      </div>
      <div className="mt-[25px] h-10 shrink-0">Step 1 - GEMMA_LM</div>
      <div className="relative mt-[25px] h-[40px] shrink-0">
        Type Of Frequentists Test To Perform.
        <TestMenu />
      </div>
      <div className="mt-[23px] flex h-[66px] w-[180px] shrink-0 items-center justify-center rounded-[5px] bg-[#dbb55b] text-[26px] text-white">RUN STEP</div>
      <div className="mt-[52px] h-0.5 w-[2264px] shrink-0 bg-[#e3e3e3]" />
      <div className="mt-[34px] flex h-[40px] shrink-0 items-center">
        <svg className="mr-[8px] h-[28px] w-[28px]" viewBox="0 0 28 28"><rect width="28" height="28" rx="5" fill="#52b43a" /><path d="M6 14.500L11.500 21.500L22 6" fill="none" stroke="#fff" strokeWidth="3" strokeLinecap="round" /></svg>
        <span className="pt-0.5">GWAS Step Completed</span>
      </div>
      <ManhattanPlot />
      <div className="mt-[2px] mr-[51px] flex h-[66px] w-[125px] shrink-0 items-center justify-center self-end rounded-[5px] bg-[#76bddc] text-[26px] text-white">NEXT</div>
    </div>
  );
}

export default function App() {
  return (
    <div className="flex h-[1912px] w-[2940px] flex-col overflow-hidden bg-black pt-[74px]">
      <TabStrip />
      <Toolbar />
      <div className="flex h-[1662px] shrink-0 overflow-hidden">
        <LeftPage />
        <div className="flex h-full w-[2789px] shrink-0 overflow-hidden bg-white">
          <Sidebar />
          <Main />
        </div>
        <RightPage />
      </div>
    </div>
  );
}
